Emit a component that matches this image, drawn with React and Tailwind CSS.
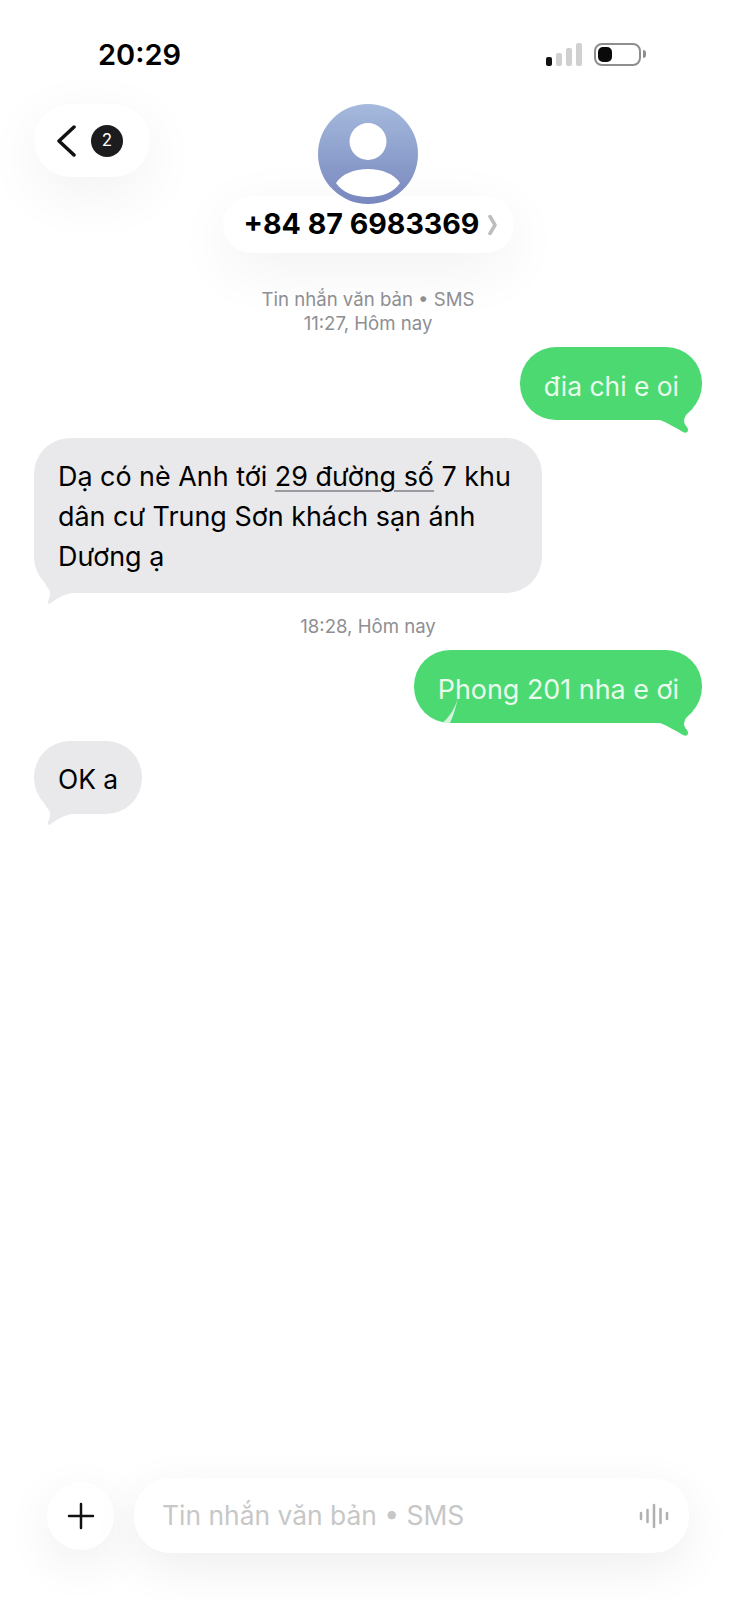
function GreenTail() {
  return (
    <svg className="absolute right-[2px] -bottom-[18px] w-10 h-10" viewBox="0 0 40 40">
      <path d="M0 22C8 25 16 30 23 34C27 36 29 33 27.500 30C25 26 22 24 26 17L33 10L20 10Z" fill="#4cd972" />
    </svg>
  )
}

function GrayTail() {
  return (
    <svg className="absolute -left-[4px] -bottom-[18px] w-[50px] h-[50px]" viewBox="0 0 50 50">
      <path d="M43 32C35 33 27 37 21 42C19 44 17 42 18 40C20 35 22 31 17 26L10 13L25 13Z" fill="#e9e9eb" />
    </svg>
  )
}

function Outgoing({ children, streak }) {
  return (
    <div className="flex justify-end">
      <div className="relative h-[73px] flex items-center pl-6 pr-[23px] pt-[6px] rounded-[36px] bg-[#4cd972] text-[#e9fbec]">
        {children}
        {streak && (
          <svg className="absolute left-[26px] bottom-0 w-[20px] h-[25px]" viewBox="0 0 20 25">
            <path d="M18 0C15 10 9 20 2 25L10 25C14 17 16 8 18 0Z" fill="#d4f3dc" />
          </svg>
        )}
        <GreenTail />
      </div>
    </div>
  )
}

function Status() {
  return (
    <div className="flex justify-between items-center h-[24px] pl-[98px] pr-[90px] mt-[42px]">
      <span className="text-[29px] font-semibold text-black leading-none">20:29</span>
      <div className="flex items-center gap-3">
        <div className="flex items-end gap-1">
          <span className="w-[6px] h-[9px] rounded-[2px] bg-[#111]" />
          <span className="w-[6px] h-[13px] rounded-[2px] bg-[#d0d0d0]" />
          <span className="w-[6px] h-[18px] rounded-[2px] bg-[#d0d0d0]" />
          <span className="w-[6px] h-[23px] rounded-[2px] bg-[#d0d0d0]" />
        </div>
        <div className="flex items-center gap-[2px]">
          <div className="w-[47px] h-[23px] rounded-[8px] border-2 border-[#8e8e8e] p-[2px] bg-white">
            <div className="w-[14px] h-full rounded-[5px] bg-[#0a0a0a]" />
          </div>
          <span className="w-[3px] h-[8px] rounded-r-full bg-[#8e8e8e]" />
        </div>
      </div>
    </div>
  )
}

export default function App() {
  return (
    <div
      className="w-[736px] h-[1600px] flex flex-col bg-white text-[26.400px] text-black overflow-hidden"
      style={{ fontFamily: 'Inter, "Liberation Sans", sans-serif' }}
    >
      <Status />

      <div className="grid grid-cols-[1fr_291px_1fr] mt-[38px]">
        <div className="pl-[34px]">
          <div className="w-[116px] h-[73px] rounded-[36px] bg-white shadow-[0_16px_60px_rgba(0,0,0,0.06)] flex items-center pl-[22px] gap-[15px]">
            <svg className="w-[20px] h-[32px]" viewBox="0 0 20 32" fill="none">
              <path d="M18 2L3 16L18 30" stroke="#111" strokeWidth="3.500" strokeLinecap="round" strokeLinejoin="round" />
            </svg>
            <span className="w-8 h-8 rounded-full bg-[#1c1c1e] text-white text-[17px] flex items-center justify-center">2</span>
          </div>
        </div>

        <div className="flex flex-col items-center">
          <div className="relative z-10 w-[100px] h-[100px] rounded-full bg-gradient-to-b from-[#a5badd] to-[#7887bd]">
            <svg className="w-full h-full" viewBox="0 0 100 100">
              <circle cx="50" cy="37.500" r="18.500" fill="#fff" />
              <path d="M18 79C24 70 36 65 50 65C64 65 76 70 82 79C76 88 64 93 50 93C36 93 24 88 18 79Z" fill="#fff" />
            </svg>
          </div>
          <div className="w-[291px] h-[57px] -mt-2 rounded-[28px] bg-white shadow-[0_16px_60px_rgba(0,0,0,0.06)] flex items-center pl-[21px] gap-[9px]">
            <span className="text-[28.600px] font-bold">+84 87 6983369</span>
            <svg className="w-[9px] h-[20px]" viewBox="0 0 9 20" fill="none">
              <path d="M2 1.500L7 10L2 18.500" stroke="#bdbdbd" strokeWidth="3.500" strokeLinejoin="round" strokeLinecap="round" />
            </svg>
          </div>
        </div>
        <div />
      </div>

      <div className="mt-[34px] text-center text-[18.600px] leading-[24px] text-[#8e8e93]">
        <div>Tin nhắn văn bản • SMS</div>
        <div>11:27, Hôm nay</div>
      </div>

      <div className="mt-[12px] pr-[34px]">
        <Outgoing>đia chi e oi</Outgoing>
      </div>

      <div className="mt-[18px] pl-[34px]">
        <div className="relative w-[508px] rounded-[36px] bg-[#e9e9eb] pl-6 pr-3 pt-[18px] pb-[17px] text-[26.900px] leading-[40px]">
          Dạ có nè Anh tới{' '}
          <span className="underline decoration-[#9a9aa0] decoration-2 underline-offset-4">29 đường số</span> 7 khu dân cư Trung Sơn khách sạn ánh Dương ạ
          <GrayTail />
        </div>
      </div>

      <div className="mt-[21px] text-center text-[18.600px] leading-[24px] text-[#8e8e93]">18:28, Hôm nay</div>

      <div className="mt-[12px] pr-[34px]">
        <Outgoing streak>
          <span className="text-[26.900px]">Phong 201 nha e ơi</span>
        </Outgoing>
      </div>

      <div className="mt-[18px] pl-[34px] flex">
        <div className="relative h-[73px] flex items-center px-6 pt-[5px] rounded-[36px] bg-[#e9e9eb]">
          OK a
          <GrayTail />
        </div>
      </div>

      <div className="flex-1" />

      <div className="flex items-center pl-[47px] pr-[47px] pb-[47px] gap-5">
        <div className="w-[67px] h-[68px] shrink-0 rounded-full bg-white shadow-[0_14px_50px_rgba(0,0,0,0.07)] flex items-center justify-center">
          <svg className="w-[28px] h-[28px]" viewBox="0 0 28 28" fill="none">
            <path d="M14 2V26M2 14H26" stroke="#111" strokeWidth="2.500" strokeLinecap="round" />
          </svg>
        </div>
        <div className="flex-1 h-[75px] rounded-[36px] bg-white shadow-[0_14px_50px_rgba(0,0,0,0.07)] flex items-center justify-between pl-7 pr-5">
          <span className="text-[#c7c7c7]">Tin nhắn văn bản • SMS</span>
          <svg className="w-[30px] h-[26px]" viewBox="0 0 30 26" fill="none" stroke="#b0b0b0" strokeWidth="2.500" strokeLinecap="round">
            <path d="M2 10V16M8.500 7V19M15 2V24M21.500 6V20M28 10V16" />
          </svg>
        </div>
      </div>
    </div>
  )
}
